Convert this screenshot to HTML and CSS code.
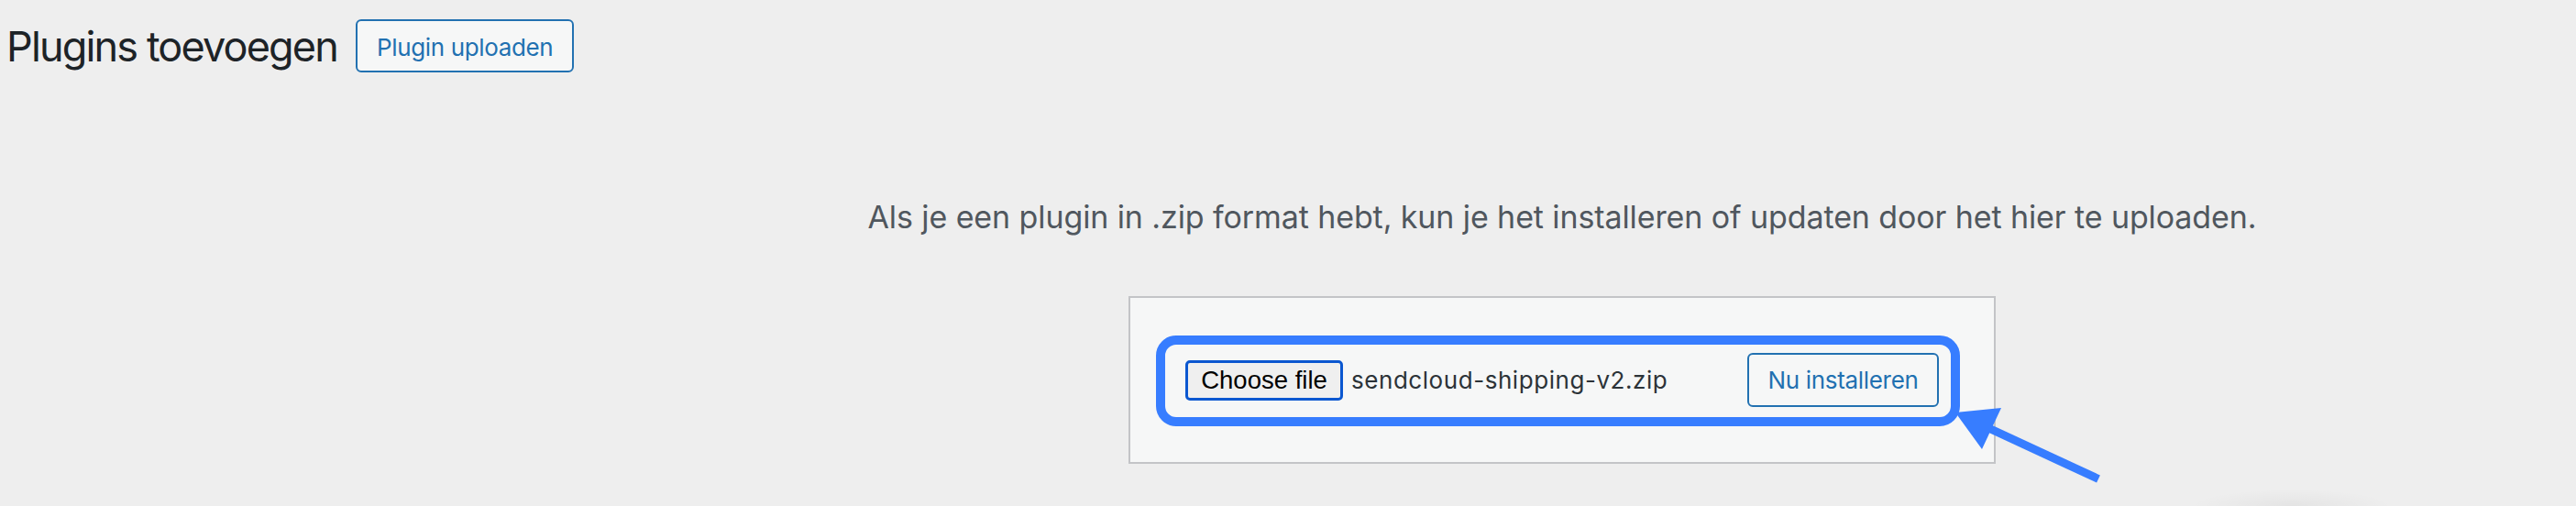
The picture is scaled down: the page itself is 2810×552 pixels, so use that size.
FILE: index.html
```html
<!DOCTYPE html>
<html lang="nl">
<head>
<meta charset="utf-8">
<title>Plugins toevoegen</title>
<link rel="stylesheet" href="styles.css">
</head>
<body>
<div class="wrap">
  <div class="page-header">
    <h1 class="page-title">Plugins toevoegen</h1>
    <a class="title-action" href="#">Plugin uploaden</a>
  </div>
  <div class="upload-area">
    <p class="install-help">Als je een plugin in .zip format hebt, kun je het installeren of updaten door het hier te uploaden.</p>
    <form class="upload-form">
      <div class="file-input">
        <span class="choose-btn">Choose file</span>
        <span class="file-name">sendcloud-shipping-v2.zip</span>
      </div>
      <button type="button" class="install-btn">Nu installeren</button>
      <div class="highlight"></div>
    </form>
  </div>
</div>
<svg class="arrow" width="200" height="110" viewBox="0 0 200 110">
  <line x1="45" y1="35" x2="169" y2="92.5" stroke="#377dff" stroke-width="9"/>
  <polygon points="13,20 63,15 42,60" fill="#377dff"/>
</svg>
<div class="shadow-card"></div>
</body>
</html>
```
FILE: styles.css
```css
html, body {
  margin: 0;
  padding: 0;
}
body {
  background: #eeeeee;
  font-family: Inter, "Noto Sans", sans-serif;
  color: #3c434a;
  width: 2810px;
  height: 552px;
  overflow: hidden;
  position: relative;
}
.page-header {
  display: flex;
  align-items: flex-start;
  padding: 21px 0 0 7px;
  gap: 20px;
}
.page-title {
  margin: 1px 0 0;
  font-size: 45px;
  letter-spacing: -1.85px;
  font-weight: 400;
  color: #1d2327;
  line-height: 58px;
}
.title-action {
  display: inline-flex;
  align-items: center;
  box-sizing: border-box;
  height: 58px;
  padding: 2px 21px 0;
  border: 2px solid #2271b1;
  border-radius: 6px;
  background: #f6f7f7;
  color: #2271b1;
  font-size: 26px;
  letter-spacing: -0.35px;
  text-decoration: none;
}
.upload-area {
  padding-left: 598px;
}
.install-help {
  margin: 0;
  padding-top: 137px;
  text-align: center;
  font-size: 34px;
  letter-spacing: -0.1px;
  line-height: 40px;
  color: #50575e;
}
.upload-form {
  position: relative;
  width: 822px;
  margin: 66px auto 0;
  padding: 60px;
  border: 2px solid #c3c4c7;
  background: #f6f7f7;
  display: flex;
  align-items: center;
  justify-content: space-between;
}
.file-input {
  display: flex;
  align-items: center;
  gap: 9px;
}
.choose-btn {
  box-sizing: border-box;
  width: 172px;
  height: 44px;
  display: inline-flex;
  align-items: center;
  justify-content: center;
  border: 3px solid #0b57d0;
  border-radius: 5px;
  background: #efefef;
  color: #000;
  font-family: "Liberation Sans", Arial, sans-serif;
  font-size: 27.5px;
}
.file-name {
  font-size: 26px;
  letter-spacing: 0.55px;
  color: #2c3338;
}
.install-btn {
  box-sizing: border-box;
  height: 59px;
  width: 209px;
  border: 2px solid #2271b1;
  border-radius: 6px;
  background: #f6f7f7;
  color: #2271b1;
  font-family: Inter, "Noto Sans", sans-serif;
  font-size: 26px;
  letter-spacing: -0.32px;
  padding: 0;
}
.highlight {
  position: absolute;
  left: 28px;
  top: 41px;
  width: 877px;
  height: 99px;
  box-sizing: border-box;
  border: 10px solid #377dff;
  border-radius: 22px;
  pointer-events: none;
}
.arrow {
  position: absolute;
  left: 2120px;
  top: 430px;
  overflow: visible;
}
.shadow-card {
  position: absolute;
  left: 2390px;
  top: 534px;
  width: 220px;
  height: 18px;
  background: radial-gradient(ellipse 50% 100% at 50% 100%, rgba(0, 0, 0, 0.045), rgba(0, 0, 0, 0) 100%);
}
```
